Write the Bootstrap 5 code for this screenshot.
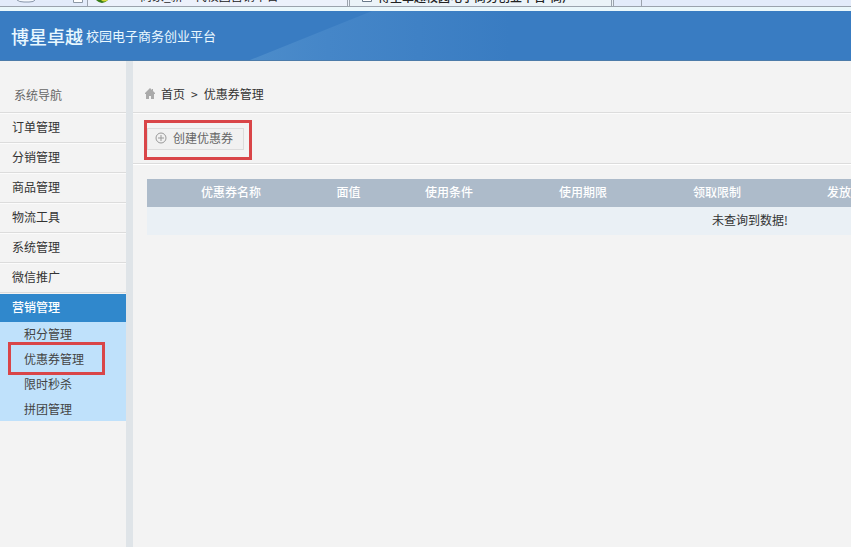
<!DOCTYPE html>
<html lang="zh-CN">
<head>
<meta charset="utf-8">
<meta name="viewport" content="width=device-width, initial-scale=1">
<title>优惠券管理</title>
<link rel="stylesheet" href="https://cdn.jsdelivr.net/npm/bootstrap@5.3.0/dist/css/bootstrap.min.css">
<style>
body{font:12px/20px "Noto Sans CJK SC",sans-serif;color:#333;background:#f3f3f3}
a{color:inherit;text-decoration:none}
.tabstrip{height:7px;background:#e3ebfa;border-bottom:1px solid #9ba3ad}
.tab-tools{width:88px;gap:36px;padding-left:16px;border-right:1px solid #9ba3ad}
.tab-page{width:262px;padding-left:8px;gap:30px;border-right:3px double #9ba3ad;background:#ecf1fb}
.tab-current{width:264px;padding-left:11px;gap:5px;height:7px;background:#ebf3f8;border-right:3px double #9ba3ad;font-weight:500}
.tab-new{width:28px;border-right:1px solid #9ba3ad}
.tab-label{line-height:14px;height:14px;margin-bottom:3px;color:#222;white-space:nowrap}
.topbar{height:54px;padding:0 11px;background:#397cc2;border-top:4px solid #eaf7fb;border-bottom:1px solid #4c7ba9;position:relative}
.topbar .rays{position:absolute;inset:0;width:700px;height:100%}
.brand{color:#e9f8ff;position:relative;gap:3px}
.brand-name{font-size:18px;font-weight:500;line-height:24px}
.brand-sub{font-size:13px;line-height:24px}
.side{width:133px;border-right:7px solid #dfe4e8}
.side-title{height:52px;padding:14px 14px 0;line-height:40px;color:#666;border-bottom:1px solid #dcdcdc}
.side-link{height:30px;padding:0 12px;line-height:26px;border-top:1px solid #fbfbfb;border-bottom:1px solid #dcdcdc}
.side-link.current{height:28px;margin-top:1px;border:0;background:#3088cc;color:#fff;font-weight:500}
.submenu{background:#bfe1fb;gap:1px}
.submenu a{line-height:24px;padding-left:24px;color:#444}
.callout{position:absolute;border:3px solid #d94548;pointer-events:none}
.callout-menu{left:8px;top:-5px;width:97px;height:33px}
.callout-action{left:-3px;top:-8px;width:108px;height:40px}
.crumbs{height:52px;padding:14px 12px 0;gap:6px;border-bottom:1px solid #dcdcdc}
.crumb-list{gap:6px}
.actions{height:51px;padding:14px 14px 0;border-top:1px solid #fbfbfb;border-bottom:1px solid #dcdcdc}
.create{width:97px;height:22px;padding:0 0 2px 7px;gap:6px;border:1px solid #dcdcdc;background:#f1f1f1;color:#666;font-size:12px;line-height:18px}
.coupons{padding:14px 0 0 14px;border-top:1px solid #fff}
.coupon-table{width:1206px;table-layout:fixed;line-height:26px}
.coupon-table th,.coupon-table td{padding:0 0 2px;text-align:center}
.coupon-table th{background:#adbbca;color:#fff;font-weight:500}
.coupon-table td{background:#eaf0f5}
.c-name{width:168px}.c-value{width:67px}.c-std{width:134px}
</style>
</head>
<body class="min-vh-100 d-flex flex-column overflow-hidden">
<div class="tabstrip d-flex overflow-hidden">
  <div class="tab-tools d-flex flex-shrink-0">
    <svg width="20" height="6"><path d="M1 0Q3 2 8 2h5Q18 2 19 0" fill="#f4f8fd" stroke="#8795a8"/></svg>
    <svg width="12" height="6"><path d="M1.500 0v2.500h9v-2.500" fill="#fff" stroke="#8d98a5"/></svg>
  </div>
  <div class="tab-page d-flex align-items-end flex-shrink-0">
    <svg width="14" height="6" class="align-self-start"><path d="M0 0Q6 6 12 0Z" fill="#387d18"/><path d="M5 0Q8 3 12 0Z" fill="#d5d936"/></svg>
    <span class="tab-label">商家_新一代校园营销平台</span>
  </div>
  <div class="tab-current d-flex align-items-end flex-shrink-0">
    <svg width="12" height="6" class="align-self-start"><path d="M1.500 0v1.500h9v-1.500" fill="#fff" stroke="#687888"/></svg>
    <span class="tab-label">博星卓越校园电子商务创业平台-商户</span>
  </div>
  <div class="tab-new"></div>
</div>
<header class="topbar d-flex align-items-center">
  <svg class="rays" viewBox="0 0 700 49" preserveAspectRatio="none" aria-hidden="true">
    <defs><linearGradient id="ray"><stop offset="0" stop-color="#4c8cca"/><stop offset=".3" stop-color="#4586c8"/><stop offset="1" stop-color="#397cc2"/></linearGradient></defs>
    <path d="M250 49L372 0H510V49Z" fill="url(#ray)"/>
  </svg>
  <div class="brand d-flex align-items-center"><span class="brand-name">博星卓越</span><span class="brand-sub">校园电子商务创业平台</span></div>
</header>
<div class="d-flex flex-grow-1">
  <nav class="side flex-shrink-0" aria-label="系统导航">
    <div class="side-title">系统导航</div>
    <a class="side-link d-block" href="#">订单管理</a>
    <a class="side-link d-block" href="#">分销管理</a>
    <a class="side-link d-block" href="#">商品管理</a>
    <a class="side-link d-block" href="#">物流工具</a>
    <a class="side-link d-block" href="#">系统管理</a>
    <a class="side-link d-block" href="#">微信推广</a>
    <a class="side-link current d-block" href="#">营销管理</a>
    <div class="submenu d-flex flex-column">
      <a href="#">积分管理</a>
      <a class="position-relative" href="#">优惠券管理<span class="callout callout-menu"></span></a>
      <a href="#">限时秒杀</a>
      <a href="#">拼团管理</a>
    </div>
  </nav>
  <main class="flex-grow-1 overflow-hidden">
    <div class="crumbs d-flex align-items-center">
      <svg width="10" height="11" viewBox="0 0 10 11" class="d-block flex-shrink-0"><path d="M5 0L0 5V6H1V11H4V8H6V11H9V6H10V5L8 3V1H7V2Z" fill="#aaa"/></svg>
      <div class="crumb-list d-flex"><a href="#">首页</a><span>&gt;</span><span>优惠券管理</span></div>
    </div>
    <div class="actions">
      <div class="position-relative">
        <button type="button" class="create d-flex align-items-center">
          <svg width="12" height="12" viewBox="0 0 12 12" fill="none" stroke="#999"><circle cx="6" cy="6" r="5"/><path d="M3 6h6M6 3v6"/></svg><span>创建优惠券</span>
        </button>
        <span class="callout callout-action"></span>
      </div>
    </div>
    <div class="coupons">
      <table class="coupon-table">
        <colgroup><col class="c-name"><col class="c-value"><col class="c-std"><col class="c-std"><col class="c-std"><col class="c-std"><col></colgroup>
        <thead><tr><th>优惠券名称</th><th>面值</th><th>使用条件</th><th>使用期限</th><th>领取限制</th><th>发放数量</th><th></th></tr></thead>
        <tbody><tr><td colspan="7">未查询到数据!</td></tr></tbody>
      </table>
    </div>
  </main>
</div>
<script src="https://cdn.jsdelivr.net/npm/bootstrap@5.3.0/dist/js/bootstrap.bundle.min.js"></script>
</body>
</html>
